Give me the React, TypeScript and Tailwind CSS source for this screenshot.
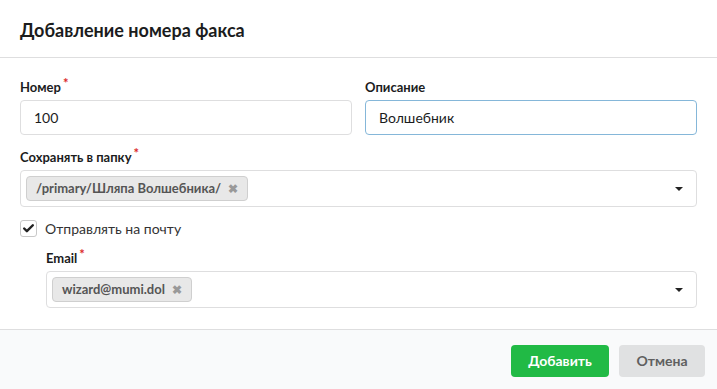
import { Check } from 'lucide-react'

function Label({ text, required }: { text: string; required?: boolean }) {
  return (
    <div className="h-[18px] mb-[4px] flex items-start text-[13px] font-bold leading-[18px] text-[#1b1c1d]">
      <span>{text}</span>
      {required && <span className="ml-[2px] text-[#db2828] text-[13px] leading-[13px] mt-[-1px]">*</span>}
    </div>
  )
}

function Tag({ text }: { text: string }) {
  return (
    <span className="inline-flex items-center h-[25px] px-[9px] rounded-[4px] border border-[#cfcfcf] bg-[#e8e8e8] text-[13px] font-bold text-[#555]">
      {text}
      <span className="ml-[7px] text-[12px] text-[#999]">✖</span>
    </span>
  )
}

function MultiSelect({ tag }: { tag: string }) {
  return (
    <div className="h-[37px] flex items-center pl-[5px] pr-[13px] border border-[#dededf] rounded-[4px] bg-white">
      <Tag text={tag} />
      <div className="flex-1" />
      <div className="w-0 h-0 border-l-[4px] border-r-[4px] border-t-[4px] border-l-transparent border-r-transparent border-t-[#222]" />
    </div>
  )
}

export default function App() {
  return (
    <div className="w-[717px] h-[389px] bg-white flex flex-col text-[#1b1c1d]" style={{ fontFamily: 'Lato, "Noto Sans", sans-serif' }}>
      <div className="h-[58px] shrink-0 flex items-center px-5 border-b border-[#dededf]">
        <h1 className="text-[18px] font-bold mt-[3px]">Добавление номера факса</h1>
      </div>

      <div className="flex-1 px-5 pt-[20px]">
        <div className="grid grid-cols-2 gap-[13px]">
          <div>
            <Label text="Номер" required />
            <div className="h-[35px] flex items-center px-[13px] border border-[#dededf] rounded-[4px] text-[14px]">100</div>
          </div>
          <div>
            <Label text="Описание" />
            <div className="h-[35px] flex items-center px-[13px] border border-[#85b7d9] rounded-[4px] text-[14px]">Волшебник</div>
          </div>
        </div>

        <div className="mt-[13px]">
          <Label text="Сохранять в папку" required />
          <MultiSelect tag="/primary/Шляпа Волшебника/" />
        </div>

        <div className="mt-[12px] flex items-center h-[18px]">
          <div className="w-[17px] h-[17px] border border-[#c8c8c8] rounded-[3px] flex items-center justify-center">
            <Check size={13} strokeWidth={4.5} className="text-[#222]" />
          </div>
          <span className="ml-[8px] text-[14px] text-[#333]">Отправлять на почту</span>
        </div>

        <div className="mt-[12px] ml-[26px]">
          <Label text="Email" required />
          <MultiSelect tag="wizard@mumi.dol" />
        </div>
      </div>

      <div className="h-[60px] shrink-0 flex items-center justify-end gap-[10px] pr-[12px] pt-[2px] border-t border-[#dededf] bg-[#f9fafb]">
        <button className="h-[32px] w-[98px] rounded-[4px] bg-[#21ba45] text-white text-[14px] font-bold">Добавить</button>
        <button className="h-[32px] w-[86px] rounded-[4px] bg-[#e0e1e2] text-[#5f5f5f] text-[14px] font-bold">Отмена</button>
      </div>
    </div>
  )
}
